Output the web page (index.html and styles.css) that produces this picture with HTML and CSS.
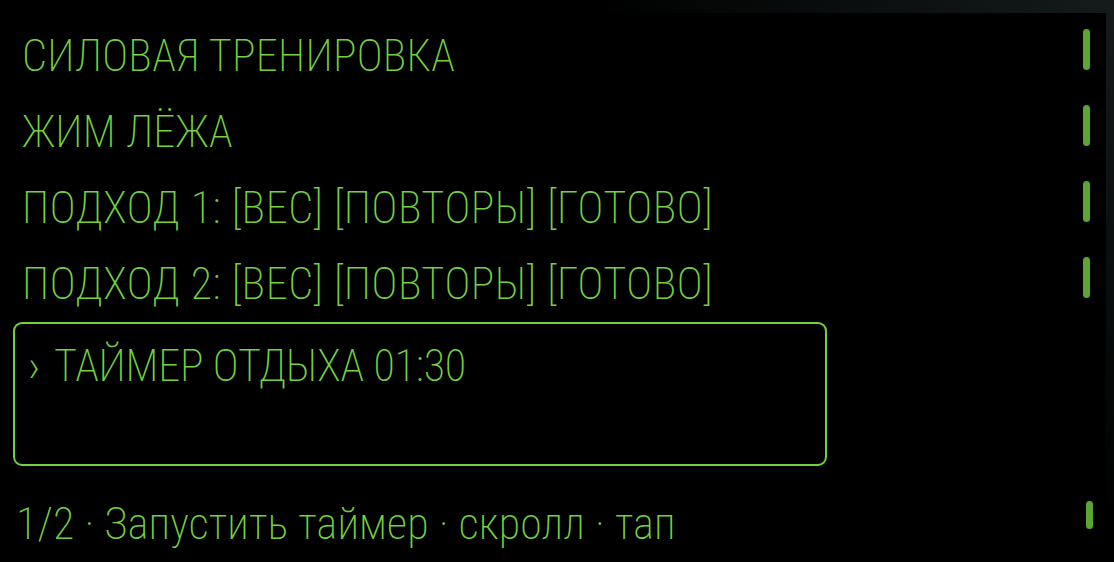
FILE: index.html
```html
<!DOCTYPE html>
<html lang="ru">
<head>
<meta charset="utf-8">
<title>Силовая тренировка</title>
<link rel="stylesheet" href="styles.css">
</head>
<body>
<main class="screen">
  <div class="row"><span class="label">СИЛОВАЯ ТРЕНИРОВКА</span><span class="bar"></span></div>
  <div class="row"><span class="label">ЖИМ ЛЁЖА</span><span class="bar"></span></div>
  <div class="row"><span class="label set">ПОДХОД 1: [ВЕС] [ПОВТОРЫ] [ГОТОВО]</span><span class="bar"></span></div>
  <div class="row"><span class="label set">ПОДХОД 2: [ВЕС] [ПОВТОРЫ] [ГОТОВО]</span><span class="bar"></span></div>
  <div class="selected"><span class="chev">›</span><span class="label timer">ТАЙМЕР ОТДЫХА 01:30</span></div>
  <div class="footer"><span class="label hint">1/2 · Запустить таймер · скролл · тап</span><span class="bar bar-small"></span></div>
</main>
</body>
</html>
```
FILE: styles.css
```css
html, body {
  margin: 0;
  padding: 0;
}
body {
  width: 1114px;
  height: 562px;
  overflow: hidden;
  background: radial-gradient(circle at 100% 0%, #141b1a 0px, #0a0e0e 260px, #000 520px);
  font-family: "Roboto Condensed", Roboto, sans-serif;
  font-weight: 200;
  color: #72d23e;
}
.screen {
  margin-top: 13px;
  margin-right: 8px;
  height: 549px;
  background: #000;
  display: flex;
  flex-direction: column;
  padding: 7px 0 0 0;
  box-sizing: border-box;
}
.row {
  height: 76px;
  display: flex;
  justify-content: space-between;
  align-items: flex-start;
  padding-left: 22px;
  padding-right: 16px;
}
.label {
  font-size: 44px;
  line-height: 48px;
  padding-top: 12px;
  white-space: nowrap;
  letter-spacing: 0.3px;
}
.set {
  letter-spacing: 0.6px;
}
.timer {
  letter-spacing: -0.2px;
}
.hint {
  letter-spacing: 0.2px;
}
.bar {
  width: 7px;
  height: 41px;
  margin-top: 9px;
  border-radius: 4px;
  background: #5da532;
}
.selected {
  margin: -2px 0 0 13px;
  width: 814px;
  height: 144px;
  box-sizing: border-box;
  border: 2px solid #72d23e;
  border-radius: 9px;
  display: flex;
  align-items: flex-start;
  padding-left: 13px;
}
.selected .label {
  padding-top: 18px;
}
.chev {
  font-size: 46px;
  line-height: 48px;
  padding-top: 18px;
  width: 26px;
}
.footer {
  display: flex;
  justify-content: space-between;
  align-items: flex-start;
  padding-left: 16px;
  padding-right: 13px;
  margin-top: 22px;
}
.footer .label {
  padding-top: 12px;
}
.bar-small {
  height: 28px;
  margin-top: 13px;
}
```
